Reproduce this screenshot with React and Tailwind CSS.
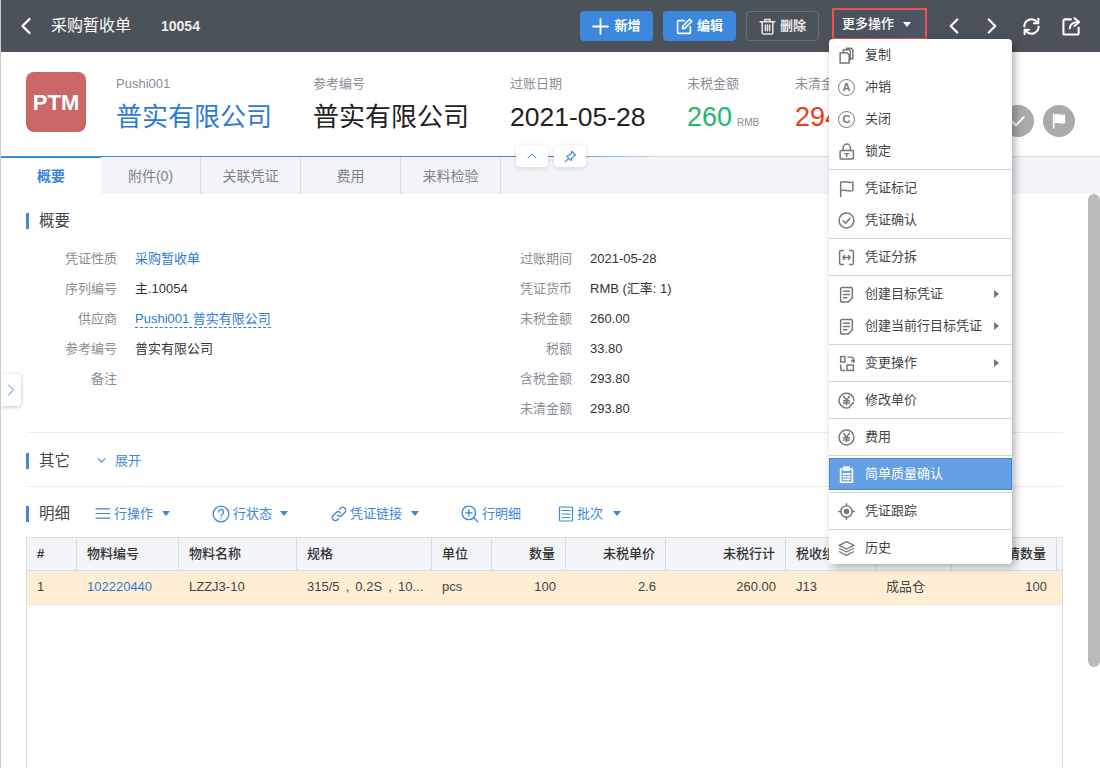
import { ChevronLeft, ChevronRight, ChevronUp, ChevronDown } from 'lucide-react';

const font = { fontFamily: '"Liberation Sans", "Noto Sans CJK SC", sans-serif' };

// small svg wrapper so the icons below stay one-liners
function Ico({ size = 16, sw = 1.4, className = '', children }) {
    return (
        <svg width={size} height={size} viewBox="0 0 16 16" fill="none" stroke="currentColor" strokeWidth={sw} strokeLinecap="round" strokeLinejoin="round" className={className}>
            {children}
        </svg>
    );
}

function Caret({ className = '' }) {
    return <span className={`inline-block w-0 h-0 border-x-[4.5px] border-x-transparent border-t-[5px] border-t-current ${className}`} />;
}

function CircleLetter({ letter }) {
    return (
        <span className="w-[17px] h-[17px] rounded-full border-[1.5px] border-[#777] flex items-center justify-center text-[11px] font-bold leading-none text-[#777]">
            {letter}
        </span>
    );
}

const YenPath = () => (
    <>
        <path d="M5.3 4.2 8 7.6l2.7-3.4" />
        <path d="M5.2 8.2h5.6M5.2 10.4h5.6M8 7.6v4.4" />
    </>
);

const menuIcons = {
    copy: <Ico size={17}><path d="M2 5.5h6.5l2 2V15H2z" /><path d="M5 5.5V2.5h5.5l1 1V12h-1" /><path d="M8 2.5V1.2h4.5l1.5 1.5V11h-2.500" /></Ico>,
    a: <CircleLetter letter="A" />,
    c: <CircleLetter letter="C" />,
    lock: <Ico size={17}><rect x="2" y="7" width="12.500" height="8" rx="1" /><path d="M4.800 7V4.500a3.400 3.400 0 0 1 6.900 0V7" /><path d="M6.500 10h3.500M8.200 10v2.600" /></Ico>,
    flag: <Ico size={17}><path d="M2.500 15.500V2c4-1 6.500 1 11.500 0v8c-5 1-7.500-1-11.500 0" /></Ico>,
    check: <Ico size={17}><circle cx="8" cy="8" r="7" /><path d="m4.800 8.200 2.300 2.300 4.200-4.500" /></Ico>,
    split: <Ico size={17}><path d="M5 1.500H2.500a1 1 0 0 0-1 1v11a1 1 0 0 0 1 1H5M11 1.500h2.500a1 1 0 0 1 1 1v11a1 1 0 0 1-1 1H11" /><path d="M4.500 8h7M6.200 6.200 4.500 8l1.700 1.800M9.800 6.200 11.500 8l-1.700 1.800" /></Ico>,
    doc: <Ico size={17}><path d="M3.500 1.500h9a1 1 0 0 1 1 1V11l-4 4h-6a1 1 0 0 1-1-1V2.500a1 1 0 0 1 1-1z" /><path d="M5.300 5h5.500M5.300 8h5.500M5.300 11h3" /></Ico>,
    change: <Ico size={17}><path d="M6.500 1.500h-4v5h4zM14.500 9.500h-6v5h6z" /><path d="M9.500 2h3a2 2 0 0 1 2 2v2.500M12.800 5l1.700 1.700L16 5M6.500 14.500h-2a2 2 0 0 1-2-2V9.500" /></Ico>,
    yenEdit: <Ico size={17}><path d="M11 14.400A7 7 0 1 1 15 8" /><YenPath /><path d="m11 13.500 3.500-3.500" /></Ico>,
    yen: <Ico size={17}><circle cx="8" cy="8" r="7" /><YenPath /></Ico>,
    clip: <Ico size={17} sw={1.6}><path d="M5 2.800H2.500v12.500h11V2.800H11" /><rect x="5.500" y="1" width="5" height="3" fill="currentColor" /><path d="M5 7.500h6M5 10h2M9 10h2M5 12.500h6" /></Ico>,
    target: <Ico size={17}><circle cx="8" cy="8" r="5.300" /><circle cx="8" cy="8" r="2.600" fill="currentColor" stroke="none" /><path d="M8 .7v2M8 13.300v2M.7 8h2M13.300 8h2" /></Ico>,
    layers: <Ico size={17} sw={1.2}><path d="M8 1.500 15 5 8 8.500 1 5z" /><path d="m1.500 8 6.500 3.300L14.500 8M1.500 11 8 14.500l6.500-3.500" /></Ico>,
};

const menuGroups = [
    [['copy', '复制'], ['a', '冲销'], ['c', '关闭'], ['lock', '锁定']],
    [['flag', '凭证标记'], ['check', '凭证确认']],
    [['split', '凭证分拆']],
    [['doc', '创建目标凭证', true], ['doc', '创建当前行目标凭证', true]],
    [['change', '变更操作', true]],
    [['yenEdit', '修改单价']],
    [['yen', '费用']],
    [['clip', '简单质量确认', false, true]],
    [['target', '凭证跟踪']],
    [['layers', '历史']],
];

const leftRows = [
    ['凭证性质', '采购暂收单', 'link'],
    ['序列编号', '主.10054'],
    ['供应商', 'Pushi001 普实有限公司', 'dashed'],
    ['参考编号', '普实有限公司'],
    ['备注', ''],
];

const rightRows = [
    ['过账期间', '2021-05-28'],
    ['凭证货币', 'RMB (汇率: 1)'],
    ['未税金额', '260.00'],
    ['税额', '33.80'],
    ['含税金额', '293.80'],
    ['未清金额', '293.80'],
];

const headers = [
    ['#', 'left'], ['物料编号', 'left'], ['物料名称', 'left'], ['规格', 'left'], ['单位', 'left'], ['数量', 'right'],
    ['未税单价', 'right'], ['未税行计', 'right'], ['税收组合', 'left'], ['仓库', 'left'], ['未清数量', 'right'], ['', 'left'],
];

const row = [
    ['1', 'left'], ['102220440', 'link'], ['LZZJ3-10', 'left'], ['315/5 , 0.2S , 10...', 'left'], ['pcs', 'left'], ['100', 'right'],
    ['2.6', 'right'], ['260.00', 'right'], ['J13', 'left'], ['成品仓', 'left'], ['100', 'right'], ['', 'left'],
];

function FormRow({ label, value, type, labelW = 'w-[91px]' }) {
    return (
        <div className="h-[30px] flex items-center text-[13px]">
            <span className={`${labelW} text-right text-[#888e96] shrink-0`}>{label}</span>
            {type === 'link' && <span className="ml-[18px] text-[#2d7ad6]">{value}</span>}
            {type === 'dashed' && <span className="ml-[18px] text-[#2d7ad6] border-b border-dashed border-[#2d7ad6] leading-[17px]">{value}</span>}
            {!type && <span className="ml-[18px] text-[#333]">{value}</span>}
        </div>
    );
}

function SectionTitle({ children }) {
    return (
        <div className="flex items-center h-4">
            <span className="w-[3px] h-4 bg-[#3d8ade]" />
            <span className="ml-[10px] text-[15.500px] text-[#444] leading-4">{children}</span>
        </div>
    );
}

function HeadStat({ label, w, children }) {
    return (
        <div className={`${w} shrink-0`}>
            <div className="text-[13px] leading-[22px] text-[#888e96] mt-[1px]">{label}</div>
            <div className="mt-[4px] h-9 leading-9 whitespace-nowrap">{children}</div>
        </div>
    );
}

export default function App() {
    return (
        <div style={font} className="relative w-[1100px] h-[768px] overflow-hidden bg-white border-l border-[#ccc] flex flex-col">
            {/* top bar */}
            <div className="h-[52px] shrink-0 bg-[#4b5259] flex items-center text-white">
                <ChevronLeft size={28} strokeWidth={2} className="ml-[11px]" />
                <span className="ml-[11px] text-base">采购暂收单</span>
                <span className="ml-[30px] text-sm font-bold text-[#eee]">10054</span>

                <button className="ml-[380px] w-[73px] h-[30px] rounded bg-[#3d87dc] flex items-center justify-center gap-[5px] text-[13px] font-bold">
                    <Ico size={17} sw={1.700}><path d="M8 1v14M1 8h14" /></Ico>
                    新增
                </button>
                <button className="ml-[10px] w-[73px] h-[30px] rounded bg-[#3d87dc] flex items-center justify-center gap-[4px] text-[13px] font-bold">
                    <Ico size={17} sw={1.500}><path d="M8 2.500H2.500a1 1 0 0 0-1 1v10a1 1 0 0 0 1 1h10a1 1 0 0 0 1-1V8" /><path d="M6.500 7.500 12.800 1.200l2 2L8.500 9.500l-2.500.5z" /></Ico>
                    编辑
                </button>
                <button className="ml-[10px] w-[73px] h-[30px] rounded border border-[#69717a] flex items-center justify-center gap-[4px] text-[13px] font-bold text-[#e8e8e8]">
                    <Ico size={17} sw={1.400}><path d="M1 3.500h14M5.500 3.500V1.500h5v2M3 3.500V14a1 1 0 0 0 1 1h8a1 1 0 0 0 1-1V3.500M6 6.500V12M8 6.500V12M10 6.500V12" /></Ico>
                    删除
                </button>
                <button className="ml-[13px] w-[95px] h-[32px] -mt-[4px] pl-[8px] border-2 border-[#f05050] bg-[linear-gradient(135deg,#4b5259,#4a5568)] flex items-center gap-[9px] text-[13px] font-medium">
                    更多操作
                    <Caret className="text-white" />
                </button>
                <ChevronLeft size={26} strokeWidth={2} className="ml-[14px]" />
                <ChevronRight size={26} strokeWidth={2} className="ml-[12px]" />
                <Ico size={19} sw={1.700} className="ml-[17px]">
                    <path d="M2 8a6 6 0 0 1 10.500-4l1 1M14 8A6 6 0 0 1 3.500 12l-1-1" />
                    <path d="M13.800 1.500V5.300H10M2.200 14.500V10.700H6" />
                </Ico>
                <Ico size={19} sw={1.700} className="ml-[21px]">
                    <path d="M7.500 2H2.200a1 1 0 0 0-1 1v10.800a1 1 0 0 0 1 1H13a1 1 0 0 0 1-1V9" />
                    <path d="M6.500 9.500c.5-3.500 3-5.300 7.500-5.300M10.500 1l4 3.200-4 3.300" />
                </Ico>
            </div>

            {/* document header */}
            <div className="h-[104px] shrink-0 flex pl-[25px] pr-[25px] pt-[20px]">
                <div className="w-[60px] h-[60px] shrink-0 rounded-lg bg-[#cb6767] flex items-center justify-center text-white font-bold text-[22px]">PTM</div>
                <div className="ml-[30px] flex">
                    <HeadStat label="Pushi001" w="w-[197px]"><span className="text-[26px] text-[#2d7ad6]">普实有限公司</span></HeadStat>
                    <HeadStat label="参考编号" w="w-[197px]"><span className="text-[26px] text-[#222]">普实有限公司</span></HeadStat>
                    <HeadStat label="过账日期" w="w-[177px]"><span className="text-[26.500px] text-[#222]">2021-05-28</span></HeadStat>
                    <HeadStat label="未税金额" w="w-[108px]">
                        <span className="text-[27px] text-[#1fb96c]">260</span>
                        <span className="ml-[5px] text-[10px] text-[#888e96]">RMB</span>
                    </HeadStat>
                    <HeadStat label="未清金额" w="w-[100px]"><span className="text-[27px] text-[#f03b15]">294</span></HeadStat>
                </div>
                <div className="ml-auto mt-[33px] flex gap-[9px]">
                    <span className="w-8 h-8 rounded-full bg-[#aaa] flex items-center justify-center text-white">
                        <Ico size={18} sw={1.800}><path d="m3 8.500 3.300 3.300L13 4.500" /></Ico>
                    </span>
                    <span className="w-8 h-8 rounded-full bg-[#aaa] flex items-center justify-center text-white">
                        <svg width="18" height="18" viewBox="0 0 16 16" fill="currentColor"><path d="M2.500 1.500h1.500v13H2.500z" /><path d="M4 2.200c3-1.200 5.500 1 9.500-.2v8c-4 1.200-6.500-1-9.500.2z" /></svg>
                    </span>
                </div>
            </div>

            {/* tabs */}
            <div className="h-[38px] shrink-0 flex flex-col bg-[#f2f4f7]">
                <div className="h-px bg-[linear-gradient(90deg,#3d8ade_0%,#3d8ade_50%,#d8dde6_60%)]" />
                <div className="flex flex-1 text-sm text-[#7c828a]">
                    <div className="w-[100px] -mt-px bg-white border-t-2 border-[#3d8ade] flex items-center justify-center font-bold text-[#3d87d8]">概要</div>
                    <div className="w-[100px] border-r border-[#d8dce6] flex items-center justify-center">附件(0)</div>
                    <div className="w-[100px] border-r border-[#d8dce6] flex items-center justify-center">关联凭证</div>
                    <div className="w-[100px] border-r border-[#d8dce6] flex items-center justify-center">费用</div>
                    <div className="w-[100px] border-r border-[#d8dce6] flex items-center justify-center">来料检验</div>
                </div>
            </div>

            {/* body */}
            <div className="flex-1 min-h-0 flex">
                <div className="flex-1 min-w-0 flex flex-col pl-[25px] pr-[25px] pt-[19px]">
                    <SectionTitle>概要</SectionTitle>
                    <div className="mt-[15px] flex">
                        <div className="w-[455px] shrink-0">
                            {leftRows.map((r) => (
                                <FormRow key={r[0]} label={r[0]} value={r[1]} type={r[2]} />
                            ))}
                        </div>
                        <div>
                            {rightRows.map((r) => (
                                <FormRow key={r[0]} label={r[0]} value={r[1]} />
                            ))}
                        </div>
                    </div>
                    <div className="mt-[8px] h-px bg-[#ececec]" />

                    <div className="mt-[18px] flex items-center">
                        <SectionTitle>其它</SectionTitle>
                        <span className="ml-[25px] flex items-center gap-[7px] text-[13px] text-[#3d87d8]">
                            <ChevronDown size={13} strokeWidth={2} />
                            展开
                        </span>
                    </div>
                    <div className="mt-[15px] h-px bg-[#ececec]" />

                    <div className="mt-[19px] flex items-center h-4 text-[13px] text-[#3d87d8]">
                        <SectionTitle>明细</SectionTitle>
                        <span className="ml-[25px] flex items-center">
                            <Ico size={15} sw={1.300}><path d="M1 3h15M1 8h15M1 13h15" /></Ico>
                            <span className="ml-[4px]">行操作</span>
                            <Caret className="ml-[9px]" />
                        </span>
                        <span className="ml-[42px] flex items-center">
                            <Ico size={18} sw={1.200}><circle cx="8" cy="8" r="7" /><path d="M5.800 6.200a2.200 2.200 0 1 1 3.200 2c-.7.400-1 .8-1 1.500M8 11.700v.3" /></Ico>
                            <span className="ml-[3px]">行状态</span>
                            <Caret className="ml-[8px]" />
                        </span>
                        <span className="ml-[43px] flex items-center">
                            <Ico size={16} sw={1.300}><path d="M6.500 9.500a3 3 0 0 0 4.300 0l3-3a3 3 0 0 0-4.300-4.300l-1.200 1.200" /><path d="M9.500 6.500a3 3 0 0 0-4.300 0l-3 3a3 3 0 0 0 4.300 4.300l1.200-1.200" /></Ico>
                            <span className="ml-[3px]">凭证链接</span>
                            <Caret className="ml-[9px]" />
                        </span>
                        <span className="ml-[42px] flex items-center">
                            <Ico size={18} sw={1.200}><circle cx="7" cy="7" r="6" /><path d="M7 4.200v5.600M4.200 7h5.600M11.500 11.500l3.500 3.500" /></Ico>
                            <span className="ml-[3px]">行明细</span>
                        </span>
                        <span className="ml-[37px] flex items-center">
                            <Ico size={16} sw={1.200}><rect x="1.500" y="1" width="13" height="14" rx="1" /><path d="M4 4.500h8M4 8h8M4 11.500h8" /></Ico>
                            <span className="ml-[3px]">批次</span>
                            <Caret className="ml-[10px]" />
                        </span>
                    </div>

                    {/* detail table */}
                    <div className="mt-[15px] flex-1 min-h-0 border-x border-t border-[#d8dce6]">
                        <table className="w-full table-fixed border-separate border-spacing-0 text-[13px]">
                            <colgroup>
                                <col className="w-[50px]" />
                                <col className="w-[102px]" />
                                <col className="w-[118px]" />
                                <col className="w-[135px]" />
                                <col className="w-[60px]" />
                                <col className="w-[74px]" />
                                <col className="w-[100px]" />
                                <col className="w-[120px]" />
                                <col className="w-[90px]" />
                                <col className="w-[76px]" />
                                <col className="w-[105px]" />
                                <col />
                            </colgroup>
                            <thead>
                                <tr className="h-[33px] bg-[#f2f4f8] text-[#333]">
                                    {headers.map((h, i) => (
                                        <th key={i} className={`px-[10px] border-r border-b border-[#d8dce6] last:border-r-0 whitespace-nowrap overflow-hidden ${i === 0 ? 'font-bold' : 'font-medium'} ${h[1] === 'right' ? 'text-right' : 'text-left'}`}>
                                            {h[0]}
                                        </th>
                                    ))}
                                </tr>
                            </thead>
                            <tbody>
                                <tr className="h-[34px] bg-[#ffeed3] text-[#444]">
                                    {row.map((c, i) => (
                                        <td key={i} className={`px-[10px] font-normal border-b border-[#f3e5cb] whitespace-nowrap overflow-hidden [word-spacing:2.5px] ${c[1] === 'right' ? 'text-right' : 'text-left'} ${c[1] === 'link' ? 'text-[#2d7ad6]' : ''}`}>
                                            {c[0]}
                                        </td>
                                    ))}
                                </tr>
                            </tbody>
                        </table>
                    </div>
                </div>

                {/* scrollbar */}
                <div className="w-3 shrink-0">
                    <div className="h-[473px] rounded-md bg-[#bbb]" />
                </div>
            </div>

            {/* collapse + pin buttons */}
            <div className="absolute left-[515px] top-[145px] flex gap-[6px]">
                <span className="w-[32px] h-[22px] rounded bg-white shadow-[0_1px_4px_rgba(0,0,0,0.15)] flex items-center justify-center text-[#3d87d8]">
                    <ChevronUp size={16} strokeWidth={1.500} />
                </span>
                <span className="w-[32px] h-[22px] rounded bg-white shadow-[0_1px_4px_rgba(0,0,0,0.15)] flex items-center justify-center text-[#3d87d8]">
                    <Ico size={13} sw={1.400}><path d="M9.500 1.500 14.500 6.500l-2 .5-3 3-.5 3L3 7.500l3-.5 3-3zM5.500 10.500 1.500 14.500" /></Ico>
                </span>
            </div>

            {/* side handle */}
            <span className="absolute left-0 top-[374px] w-[20px] h-[32px] rounded-r bg-white shadow-[0_1px_4px_rgba(0,0,0,0.25)] flex items-center justify-center text-[#3d87d8]">
                <ChevronRight size={22} strokeWidth={1.200} />
            </span>

            {/* 更多操作 dropdown */}
            <div className="absolute left-[828px] top-[39px] w-[183px] rounded bg-white shadow-[3px_3px_8px_rgba(0,0,0,0.3)] text-[13px] text-[#444]">
                {menuGroups.map((g, gi) => (
                    <div key={gi} className={gi > 0 ? 'mt-[2px] pt-[2px] border-t border-[#d4d4d4]' : ''}>
                        {g.map(([icon, label, sub, active]) => (
                            <div key={label} className={`h-[32px] flex items-center pr-[13px] ${active ? 'bg-[#659fe4] border border-[#3d87dd] pl-[8px] text-white' : 'pl-[9px]'}`}>
                                <span className={`w-[17px] h-[17px] flex items-center justify-center shrink-0 ${active ? 'text-white' : 'text-[#777]'}`}>
                                    {menuIcons[icon]}
                                </span>
                                <span className="ml-[10px]">{label}</span>
                                {sub && <span className="ml-auto w-0 h-0 border-y-[4px] border-y-transparent border-l-[5px] border-l-[#777]" />}
                            </div>
                        ))}
                    </div>
                ))}
            </div>
        </div>
    );
}
